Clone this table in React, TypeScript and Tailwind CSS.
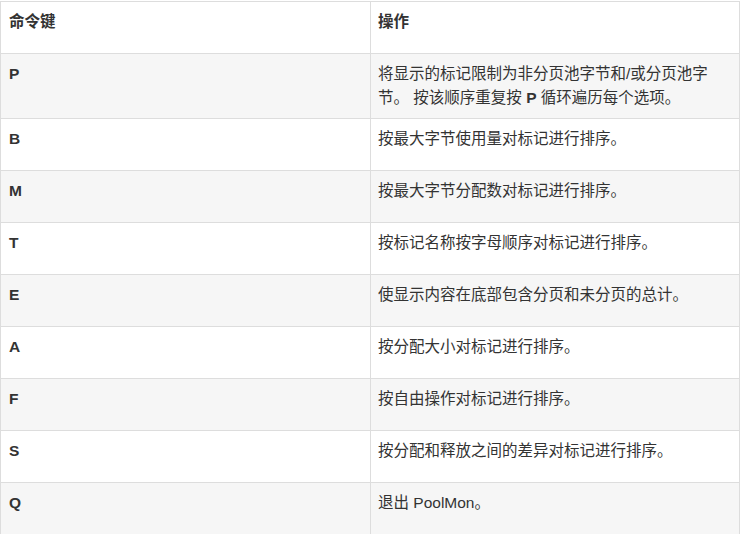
import type { ReactNode } from 'react';

type Row = { key: string; action: ReactNode; tall?: boolean };

const rows: Row[] = [
  {
    key: 'P',
    tall: true,
    action: (
      <>
        将显示的标记限制为非分页池字节和/或分页池字节。 按该顺序重复按 <strong className="font-bold">P</strong> 循环遍历每个选项。
      </>
    ),
  },
  { key: 'B', action: '按最大字节使用量对标记进行排序。' },
  { key: 'M', action: '按最大字节分配数对标记进行排序。' },
  { key: 'T', action: '按标记名称按字母顺序对标记进行排序。' },
  { key: 'E', action: '使显示内容在底部包含分页和未分页的总计。' },
  { key: 'A', action: '按分配大小对标记进行排序。' },
  { key: 'F', action: '按自由操作对标记进行排序。' },
  { key: 'S', action: '按分配和释放之间的差异对标记进行排序。' },
  { key: 'Q', action: '退出 PoolMon。' },
];

export default function App() {
  return (
    <div
      className="w-[741px] h-[534px] overflow-hidden bg-white text-[#333] text-[15.5px] leading-6"
      style={{ fontFamily: '"Liberation Sans", "Noto Sans CJK SC", sans-serif' }}
    >
      <div className="mt-px w-[740px] border-x border-t border-[#ddd]">
        <div className="flex h-[52px] border-b border-[#ddd] bg-white">
          <div className="w-[370px] border-r border-[#ddd] pl-2 pt-2 font-bold">命令键</div>
          <div className="flex-1 pl-[7px] pt-2 font-bold">操作</div>
        </div>
        {rows.map((row, i) => (
          <div
            key={row.key}
            className={`flex border-b border-[#ddd] ${row.tall ? 'h-[65px]' : 'h-[52px]'} ${
              i % 2 === 0 ? 'bg-[#f6f6f6]' : 'bg-white'
            }`}
          >
            <div className="w-[370px] border-r border-[#ddd] pl-2 pt-2 font-bold">{row.key}</div>
            <div className="flex-1 pl-[7px] pr-5 pt-2">{row.action}</div>
          </div>
        ))}
      </div>
    </div>
  );
}
